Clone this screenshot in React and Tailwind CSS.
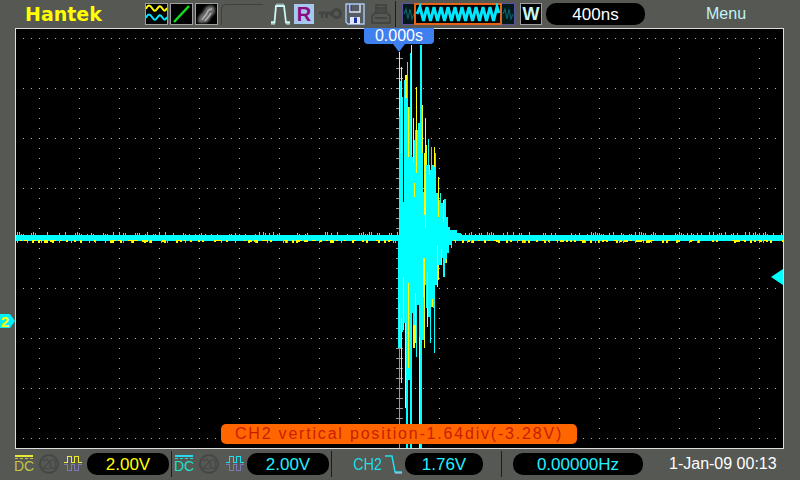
import React from 'react';

const sans = "font-['Liberation_Sans',sans-serif]";

// columns of the burst: [x from, x to, y]
const upperCyan = [
    [399, 402, 81], [402, 403, 97], [403, 404, 202], [404, 407, 80], [407, 408, 62], [408, 410, 107],
    [410, 412, 53], [412, 413, 157], [413, 415, 140], [415, 418, 130], [418, 420, 123], [420, 422, 45],
    [422, 423, 143], [423, 426, 192], [426, 428, 165], [428, 429, 139], [429, 431, 170], [431, 432, 147],
    [432, 434, 165], [434, 436, 153], [436, 438, 193], [438, 440, 200], [440, 441, 193], [441, 444, 203],
    [444, 446, 199], [446, 448, 217], [448, 450, 227], [450, 457, 230], [457, 461, 233],
];
const lowerCyan = [
    [398, 401, 348], [401, 403, 332], [403, 404, 283], [404, 406, 323], [406, 408, 448], [408, 410, 380],
    [410, 412, 448], [412, 413, 313], [413, 416, 327], [416, 417, 357], [417, 419, 305], [419, 420, 337],
    [420, 422, 448], [422, 424, 340], [424, 426, 285], [426, 428, 308], [428, 430, 317], [430, 431, 343],
    [431, 433, 307], [433, 434, 308], [434, 435, 353], [435, 437, 285], [437, 439, 280], [439, 441, 265],
    [441, 443, 258], [443, 445, 277], [445, 447, 263], [447, 449, 253], [449, 451, 245], [451, 452, 248],
];
// yellow traces: [x, y1, y2, width]
const yellowLines = [
    [399, 52, 116, 1], [401, 67, 153, 1], [405, 75, 98, 2], [408, 107, 157, 1], [411, 45, 155, 1], [413, 118, 163, 1],
    [414, 183, 197, 1], [416, 87, 173, 1], [422, 105, 153, 1], [424, 153, 215, 2], [425, 118, 228, 1], [426, 145, 165, 1],
    [429, 165, 175, 1], [434, 147, 167, 1], [438, 177, 217, 1], [443, 200, 222, 1],
    [399, 303, 347, 1], [401, 318, 383, 1], [403, 277, 330, 1], [405, 323, 408, 1], [408, 283, 368, 1],
    [413, 325, 348, 2], [415, 293, 343, 1], [419, 337, 448, 1], [423, 258, 297, 2], [424, 273, 348, 1],
    [427, 272, 327, 1], [432, 299, 307, 1], [437, 245, 287, 1], [438, 265, 280, 1], [441, 249, 265, 1], [446, 259, 263, 1],
];

const band = [];
let seed = 1234;
const rnd = () => {
    seed = (seed * 9301 + 49297) % 233280;
    return seed / 233280;
};
for (let x = 16; x < 783; x += 2) {
    if (rnd() < 0.4) band.push({ x, y: 240, h: 1 + Math.floor(rnd() * 3), c: '#ffff00' });
    if (rnd() < 0.45) band.push({ x: x + 1, y: 232 + Math.floor(rnd() * 3), h: 3, c: '#00ffff' });
    if (rnd() < 0.12) band.push({ x: x + 1, y: 241, h: 2, c: '#00ffff' });
}

const Scope = () => {
    const dots = [];
    for (let y = 38; y <= 438; y += 50) {
        for (let x = 23; x < 780; x += 8) dots.push([x, y]);
    }
    for (let x = 39; x < 780; x += 40) {
        for (let y = 48; y <= 428; y += 10) dots.push([x, y]);
    }
    const ticks = [];
    for (let y = 58; y <= 438; y += 10) ticks.push(y);

    return (
        <svg viewBox="16 29 767 419" className="block w-full h-full" shapeRendering="crispEdges">
            {dots.map(([x, y], i) => <rect key={i} x={x} y={y} width="1" height="1" fill="#b4b4b4" />)}
            {ticks.map((y) => <rect key={y} x="396" y={y} width="7" height="1" fill="#9a9a9a" />)}
            <rect x="399" y="52" width="1" height="396" fill="#9a9a9a" />
            <rect x="16" y="235" width="767" height="6" fill="#00ffff" />
            {band.map((b, i) => <rect key={i} x={b.x} y={b.y} width={b.c === '#ffff00' ? 2 : 1} height={b.h} fill={b.c} />)}
            {upperCyan.map(([a, b, y]) => <rect key={a} x={a} y={y} width={b - a} height={240 - y} fill="#00ffff" />)}
            {lowerCyan.map(([a, b, y]) => <rect key={a} x={a} y="240" width={b - a} height={y - 240} fill="#00ffff" />)}
            {yellowLines.map(([x, a, b, w], i) => <rect key={i} x={x} y={a} width={w} height={b - a} fill="#ffff00" />)}
        </svg>
    );
};

const IconBox = ({ children }) => (
    <div className="w-[23px] h-[22px] bg-black border border-[#a0a0a0] shrink-0">{children}</div>
);

const Pill = ({ className, children }) => (
    <div className={`h-[22px] rounded-[10px] bg-black flex items-center justify-center text-[17px] leading-none ${sans} ${className}`}>
        {children}
    </div>
);

const Dc = ({ line, text }) => (
    <div className="w-[18px] shrink-0 flex flex-col items-center">
        <div className={`w-full h-[2px] ${line}`}></div>
        <div className={`w-full mt-[1px] border-t border-dashed ${text}`}></div>
        <div className={`text-[14px] leading-[13px] mt-[1px] ${text}`}>DC</div>
    </div>
);

const Limit = () => (
    <div className="w-[20px] h-[20px] rounded-full border-2 border-[#454744] flex items-center justify-center text-[14px] leading-none tracking-[-1px] text-[#454744] shrink-0">
        20
    </div>
);

const CouplingWave = ({ color }) => (
    <svg width="18" height="18" viewBox="0 0 18 18" fill="none" className="shrink-0" shapeRendering="crispEdges">
        <path d="M0 7.5H3.5V1.5H7.5V7.5H10.5V1.5H14.5V7.5H18" stroke={color} strokeWidth="1.5" />
        <path d="M0 9.5H3.5V15.5H7.5V9.5H10.5V15.5H14.5V9.5H18" stroke="#7c78b4" strokeWidth="1.5" />
    </svg>
);

const Divider = ({ className }) => <div className={`w-[1px] h-[26px] bg-[#1c1c1c] shrink-0 ${className}`}></div>;

const App = () => {
    return (
        <div className={`w-[800px] h-[480px] bg-[#565854] flex flex-col overflow-hidden relative ${sans}`}>
            {/* top bar */}
            <div className="h-[28px] flex items-center shrink-0">
                <div className="ml-[25px] w-[120px] shrink-0 text-[19px] leading-none font-bold text-[#ffff00] font-['DejaVu_Sans',sans-serif]">Hantek</div>
                <div className="flex gap-[2px]">
                    <IconBox>
                        <svg viewBox="0 0 21 20" className="block w-full h-full" fill="none" strokeWidth="2">
                            <path d="M0 5C2 0 4 1 6 4S9 8 11 5 14 1 16 4 19 8 21 4" stroke="#ffff00" />
                            <path d="M0 14C2 9 4 10 6 13S9 17 11 14 14 10 16 13 19 17 21 13" stroke="#00e8ff" />
                        </svg>
                    </IconBox>
                    <IconBox>
                        <svg viewBox="0 0 21 20" className="block w-full h-full" fill="none">
                            <path d="M3 18L18 2" stroke="#10e020" strokeWidth="2.5" />
                        </svg>
                    </IconBox>
                    <IconBox>
                        <svg viewBox="0 0 21 20" className="block w-full h-full">
                            <path d="M2 17C2 11 5 11 7 8S9 3 12 2 19 1 19 6 17 10 15 13 13 19 8 19 2 19 2 17Z" fill="#6c6c6c" className="blur-[1px]" />
                            <path d="M6 16C8 12 10 12 11 9S13 5 16 5M9 17C11 14 13 13 15 9" stroke="#b0b0b0" strokeWidth="1.5" fill="none" className="blur-[0.5px]" />
                        </svg>
                    </IconBox>
                </div>
                <div className="ml-[3px] w-[42px] h-[21px] rounded-tl-[5px] border-l border-t border-[#3e403d] shrink-0"></div>
                {/* trigger edge */}
                <svg width="21" height="22" viewBox="0 0 21 22" fill="none" className="ml-[7px] shrink-0">
                    <path d="M1 19.5H4.5L6 3H14L16 19.5H20" stroke="#c8f6f4" strokeWidth="1.8" />
                    <path d="M7 0.5V4M9 0.5V4M11 0.5V4M13 0.5V4M2 18V22M4 18V22M17 18V22M19 18V22" stroke="#c8f6f4" />
                </svg>
                <div className="ml-[3px] w-[20px] h-[20px] bg-[#a4c8ee] flex items-center justify-center text-[20px] leading-none font-bold text-[#8a0a80] shrink-0">R</div>
                {/* key */}
                <svg width="23" height="12" viewBox="0 0 23 12" className="ml-[5px] shrink-0">
                    <path d="M0 3.5H13V8H11V6.5H9V10H6V6.5H4V10H2V6.5H0Z" fill="#434542" />
                    <circle cx="17.5" cy="5.5" r="4" fill="none" stroke="#434542" strokeWidth="3" />
                </svg>
                {/* save */}
                <svg width="20" height="22" viewBox="0 0 20 22" fill="none" className="ml-[3px] shrink-0">
                    <path d="M1 1H19V21H3L1 19Z" fill="#565c62" stroke="#a8c8f0" strokeWidth="1.4" />
                    <path d="M5 1.5V9H15V1.5" stroke="#dce8f8" strokeWidth="1.4" />
                    <path d="M5 21V14H15V21" fill="#dce8f8" />
                    <path d="M9 14.5H12V20H9Z" fill="#1c2ea0" />
                    <path d="M6 2V8" stroke="#1c2ea0" />
                </svg>
                {/* print */}
                <svg width="20" height="22" viewBox="0 0 20 22" fill="none" stroke="#434542" strokeWidth="2" className="ml-[6px] shrink-0">
                    <path d="M5 10V2H15V10M5 5H15M5 7.5H15" />
                    <path d="M4 10H16L19 13V20H1V13Z" />
                    <path d="M4 15H16" />
                </svg>
                <Divider className="ml-[4px]" />
                {/* memory overview */}
                <svg width="113" height="22" viewBox="0 0 113 22" fill="none" className="ml-[6px] shrink-0">
                    <rect x="0.5" y="0.5" width="112" height="21" fill="#031a1c" stroke="#5c52a0" />
                    <path d="M2 11L4 6 6 16 8 6 10 16 12 11M101 11L103 6 105 16 107 6 109 16 111 11" stroke="#0a6068" strokeWidth="1.2" />
                    <rect x="13" y="1" width="86" height="20" fill="#000" stroke="#e8641a" strokeWidth="2" />
                    <path d="M15 11L18 4 21.5 18 25 4 28.5 18 32 4 35.5 18 39 4 42.5 18 46 4 49.5 18 53 4 56.5 18 60 4 63.5 18 67 4 70.5 18 74 4 77.5 18 81 4 84.5 18 88 4 91.5 18 95 4 97 10" stroke="#00e8ff" strokeWidth="3" />
                </svg>
                <div className="ml-[5px] w-[22px] h-[22px] bg-black border border-[#a0a0a0] flex items-center justify-center text-[18px] leading-none font-bold text-[#c8f6f4] shrink-0">W</div>
                <Pill className="ml-[4px] w-[99px] text-white">400ns</Pill>
                <div className="ml-[61px] text-[16px] leading-none text-[#c0f4f4]">Menu</div>
            </div>

            {/* screen */}
            <div className="ml-[15px] w-[769px] h-[421px] border border-[#dcdcdc] bg-black relative shrink-0">
                <Scope />
                <div className="absolute left-[755px] top-[240px] w-0 h-0 border-y-[8px] border-y-transparent border-r-[12px] border-r-[#00ffff]"></div>
                <div className="absolute left-[205px] top-[395px] w-[356px] h-[20px] rounded-[5px] bg-[#ff6600] flex items-center justify-center text-[16px] leading-none text-[#c81e00] tracking-[1.8px] whitespace-nowrap">
                    CH2 vertical position-1.64div(-3.28V)
                </div>
            </div>

            {/* trigger time flag */}
            <div className="absolute left-[364px] top-[28px] w-[70px] h-[16px] rounded-b-[4px] bg-[#3f80f0] flex items-center justify-center text-[16px] leading-none text-white">0.000s</div>
            <div className="absolute left-[393px] top-[44px] w-0 h-0 border-x-[6px] border-x-transparent border-t-[8px] border-t-[#3f80f0]"></div>

            {/* ch2 level marker */}
            <div className="absolute left-0 top-[314px] w-[10px] h-[14px] bg-[#00f0f8] flex items-center justify-center text-[15px] leading-none font-bold text-[#ffff00]">2</div>
            <div className="absolute left-[10px] top-[314px] w-0 h-0 border-y-[7px] border-y-transparent border-l-[5px] border-l-[#00f0f8]"></div>

            {/* bottom bar */}
            <div className="flex-1 flex items-center pb-[1px]">
                <div className="ml-[15px] flex items-center">
                    <Dc line="bg-[#e8e838]" text="text-[#c4c440] border-[#c4c440]" />
                    <div className="ml-[6px]"><Limit /></div>
                    <div className="ml-[5px]"><CouplingWave color="#ecec30" /></div>
                </div>
                <Pill className="ml-[5px] w-[82px] text-[#ffff00]">2.00V</Pill>
                <Divider className="ml-[2px]" />
                <div className="ml-[3px] flex items-center">
                    <Dc line="bg-[#28d8f0]" text="text-[#20e0c8] border-[#20d8e0]" />
                    <div className="ml-[6px]"><Limit /></div>
                    <div className="ml-[7px]"><CouplingWave color="#20e0f0" /></div>
                </div>
                <Pill className="ml-[3px] w-[82px] text-[#20f0ff]">2.00V</Pill>
                <Divider className="ml-[2px]" />
                <div className="ml-[21px] w-[28px] shrink-0 text-[17px] leading-none text-[#20e0f0] whitespace-nowrap origin-left scale-x-[0.85]">CH2</div>
                <svg width="17" height="20" viewBox="0 0 17 20" fill="none" className="ml-[4px] shrink-0">
                    <path d="M0 2H7L10 18H17" stroke="#20e0f0" strokeWidth="1.5" />
                    <path d="M10 19H17" stroke="#c0d8f8" />
                </svg>
                <Pill className="ml-[3px] w-[78px] text-[#20f0ff]">1.76V</Pill>
                <Divider className="ml-[18px]" />
                <Pill className="ml-[11px] w-[130px] text-[#20f0ff]">0.00000Hz</Pill>
                <div className="ml-[26px] text-[16px] leading-none text-white whitespace-nowrap">1-Jan-09 00:13</div>
            </div>
        </div>
    );
};

export default App;
